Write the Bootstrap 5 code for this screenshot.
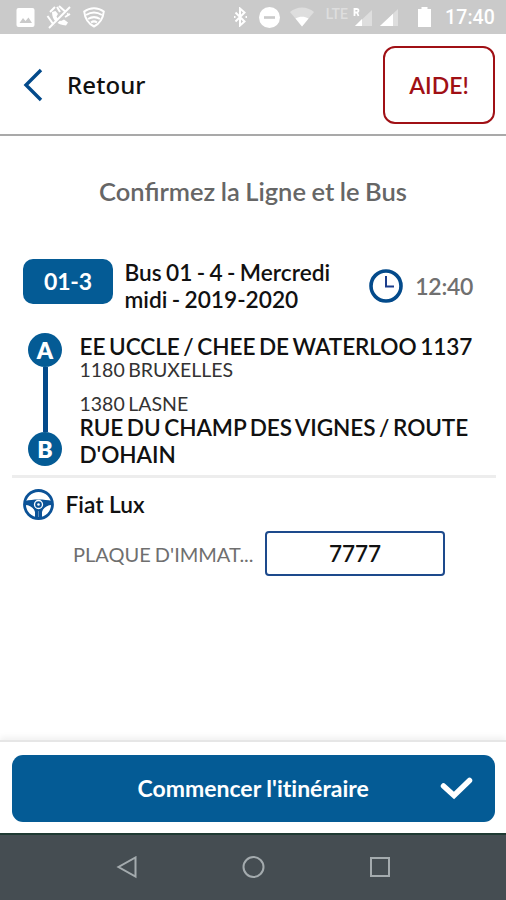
<!DOCTYPE html>
<html lang="fr">
<head>
<meta charset="utf-8">
<meta name="viewport" content="width=device-width, initial-scale=1">
<title>Confirmez la Ligne et le Bus</title>
<link href="https://cdn.jsdelivr.net/npm/bootstrap@5.3.0/dist/css/bootstrap.min.css" rel="stylesheet">
<style>
  :root { --brand: #045b95; --line-blue: #034a8b; }
  body { font-family: Lato, "Open Sans", sans-serif; font-weight: 600; color: #111; height: 900px; overflow: hidden; }
  svg { display: block; flex: none; }
  .status { height: 34px; background: #cacaca; color: #fff; padding: 0 11px 0 16px; }
  .status-time { font: 500 19.5px/34px Roboto, sans-serif; margin-left: 14px; padding-top: 2px; letter-spacing: .1px; }
  .lte { font: 500 14px/14px Roboto, sans-serif; color: #dedede; margin: -7px 5px 0 12px; }
  .gap-alert { margin-left: 11px; }
  .gap-dnd { margin-left: 11px; }
  .gap-wifi { margin-left: 10px; }
  .gap-signal { margin-left: 7px; }
  .gap-battery { margin-left: 20px; }
  .topbar { height: 102px; border-bottom: 2px solid #a9a9a9; padding: 2px 11px 0 23px; }
  .back-label { font-family: "Noto Sans", sans-serif; font-weight: 500; font-size: 24px; line-height: 30px; margin-left: 24px; letter-spacing: .1px; }
  .help { width: 112px; height: 78px; border: 2px solid #a01015; border-radius: 12px; color: #a01015; font-size: 23px; font-weight: 600; padding: 0; }
  .page-title { font-size: 25.5px; line-height: 30px; color: #666; margin: 40px 0 0; font-weight: 600; word-spacing: -.8px; }
  .trip { margin: 53px 33px 0 23px; height: 54px; }
  .line-tag { width: 90px; height: 45px; border-radius: 10px; background: var(--brand); color: #fff; font-size: 23px; line-height: 45px; font-weight: 700; letter-spacing: -.2px; }
  .trip-name { width: 232px; margin: 0 0 0 11.5px; font-size: 22.7px; line-height: 27px; word-spacing: -1.3px; }
  .trip-time { font-size: 23px; color: #707070; margin-left: 12px; line-height: 28px; letter-spacing: -.3px; }
  .stops { margin: 20px 10px 0 12px; padding: 0 0 9px 16px; border-bottom: 3px solid #ededed; height: 145px; }
  .stop-dot { width: 34px; height: 34px; border-radius: 50%; background: var(--brand); color: #fff; font-size: 23px; line-height: 34px; font-weight: 800; }
  .stop-link { width: 5px; height: 65px; background: var(--line-blue); }
  .stop-text { margin: 0 0 0 17.5px; font-size: 22.6px; line-height: 27px; word-spacing: -1.9px; letter-spacing: -.08px; }
  .town { font-size: 19.5px; line-height: 20px; font-weight: 400; color: #333; word-spacing: -1.5px; letter-spacing: 0; }
  .town-end { margin-top: 14px; }
  .driver { margin: 9px 0 0 23px; height: 34px; font-size: 22.7px; }
  .driver-name { margin: 2px 0 0 11.5px; }
  .plate { margin: 10px 61px 0 73px; height: 46px; }
  .plate-label { width: 183px; font-size: 20px; font-weight: 400; color: #6f6f6f; word-spacing: -1px; }
  .plate-input { width: 180px; height: 45px; border: 2px solid #1d4a8c; border-radius: 4px; font-size: 22.500px; font-weight: 600; color: #111; padding: 0; }
  .bottom { height: 93px; border-top: 2px solid #e6e6e6; padding: 13px 11px 0 12px; box-shadow: 0 -3px 6px rgba(0,0,0,.06); }
  .start { height: 67px; border-radius: 11px; background: var(--brand); color: #fff; font-size: 23px; font-weight: 700; padding: 0 22px 0 125.5px; border: 0; font-variant-ligatures: none; }
  .sysnav { height: 67px; background: #454d52; border-top: 2px solid #1f3a33; }
</style>
</head>
<body class="d-flex flex-column bg-white">
  <div class="status d-flex align-items-center">
    <svg width="19" height="19" viewBox="0 0 18 19"><rect width="18" height="19" rx="2" fill="#fff"/><path d="M3 15l3.500-5 2.500 3 3-3.500 3.500 5.500z" fill="#cacaca"/></svg>
    <svg class="gap-alert" width="26" height="26" viewBox="0 0 26 26"><path d="M6 8c0 8 5 13 14 13.500l2-3-4-3-3 1.500c-2-1-3.500-2.500-4.500-4.500L12 10 9.500 7z" fill="#fff"/><path d="M1.500 12l7 10M9 3l-5 5M13 2l9 8M11 3l3 5M19 13l5-3" stroke="#fff" stroke-width="2" fill="none"/><path d="M5 24L25 4" stroke="#cacaca" stroke-width="2"/><path d="M3 24L24 3" stroke="#fff" stroke-width="2"/></svg>
    <svg class="gap-alert" width="22" height="21" viewBox="0 0 22 21"><path d="M1.200 4.500C7 0 15 0 20.800 4.500 20 12 16 17 11 19.500 6 17 2 12 1.200 4.500z" fill="none" stroke="#fff" stroke-width="2"/><path d="M3 8c5-3 11-3 16 0M5 12c4-2.500 8-2.500 12 0M8 15.500c2-1.500 4-1.500 6 0" fill="none" stroke="#fff" stroke-width="2"/></svg>
    <svg class="ms-auto" width="15" height="20" viewBox="0 0 15 20"><path d="M2.500 5.500l9 9L7 18.500v-17l4.500 4L2.500 14.500M1 10h1.500M12.500 10H14" fill="none" stroke="#fff" stroke-width="2"/></svg>
    <svg class="gap-dnd" width="21" height="21" viewBox="0 0 21 21"><circle cx="10.500" cy="10.500" r="10.500" fill="#fff"/><path d="M5 10.500h11" stroke="#cacaca" stroke-width="2.600"/></svg>
    <svg class="gap-wifi" width="24" height="20" viewBox="0 0 24 20"><path d="M0 5C7-1 17-1 24 5L12 19.500z" fill="#dedede"/><path d="M5.500 11.500c4-2.500 9-2.500 13 0L12 19.500z" fill="#fff"/></svg>
    <span class="lte">LTE</span>
    <svg width="20" height="20" viewBox="0 0 20 20"><path d="M19 3v16H2z" fill="#dedede"/><path d="M9 12v7H2z" fill="#fff"/><path d="M1.500 9V2h2.200a1.600 1.600 0 010 3.500H2M4 5.500L5.500 9" stroke="#fff" stroke-width="1.800" fill="none"/></svg>
    <svg class="gap-signal" width="18" height="18" viewBox="0 0 18 18"><path d="M18 1v17H0z" fill="#dedede"/><path d="M13 5.700V18H0z" fill="#fff"/></svg>
    <svg class="gap-battery" width="13" height="20" viewBox="0 0 13 20"><path d="M3.500 0h6v2H13v18H0V2h3.500z" fill="#fff"/></svg>
    <span class="status-time">17:40</span>
  </div>

  <header class="topbar d-flex align-items-center">
    <svg width="20" height="34" viewBox="0 0 20 34"><path d="M18 2L3 17l15 15" fill="none" stroke="#034a8b" stroke-width="3.400"/></svg>
    <span class="back-label">Retour</span>
    <button class="help btn ms-auto">AIDE!</button>
  </header>

  <main class="flex-grow-1">
    <h1 class="page-title text-center">Confirmez la Ligne et le Bus</h1>
    <div class="trip d-flex align-items-center">
      <div class="line-tag text-center align-self-start">01-3</div>
      <div class="trip-name">Bus 01 - 4 - Mercredi<br>midi - 2019-2020</div>
      <svg class="ms-auto" width="34" height="34" viewBox="0 0 34 34"><circle cx="17" cy="17" r="15" fill="none" stroke="#034a8b" stroke-width="3.600"/><path d="M17 7v10.500h8" fill="none" stroke="#1b3c8c" stroke-width="2"/></svg>
      <div class="trip-time">12:40</div>
    </div>
    <div class="stops d-flex">
      <div class="d-flex flex-column align-items-center">
        <div class="stop-dot text-center">A</div>
        <div class="stop-link"></div>
        <div class="stop-dot text-center">B</div>
      </div>
      <div class="stop-text text-nowrap">
        <div>EE UCCLE / CHEE DE WATERLOO 1137</div>
        <div class="town">1180 BRUXELLES</div>
        <div class="town town-end">1380 LASNE</div>
        <div>RUE DU CHAMP DES VIGNES / ROUTE<br>D'OHAIN</div>
      </div>
    </div>
    <div class="driver d-flex align-items-center">
      <svg width="31" height="31" viewBox="0 0 31 31"><circle cx="15.500" cy="15.500" r="14" fill="none" stroke="#0b5297" stroke-width="2.800"/><path d="M2 12c8-2 19-2 27 0v4c-5 0-9 3-10 7v6h-7v-6c-1-4-5-7-10-7z" fill="#0b5297"/><circle cx="15.500" cy="15.500" r="4" fill="#0b5297" stroke="#fff" stroke-width="1.300"/><circle cx="15.500" cy="15.500" r="1.300" fill="#fff"/><path d="M15.500 22v6" stroke="#5b8bbb" stroke-width="1"/></svg>
      <span class="driver-name">Fiat Lux</span>
    </div>
    <div class="plate d-flex align-items-start justify-content-between">
      <label class="plate-label text-nowrap align-self-center" for="plate">PLAQUE D'IMMAT...</label>
      <input id="plate" class="plate-input form-control flex-shrink-0 text-center" value="7777">
    </div>
  </main>

  <div class="bottom bg-white">
    <button class="start btn w-100 d-flex align-items-center justify-content-between"><span>Commencer l'itinéraire</span>
      <svg width="33" height="24" viewBox="0 0 33 24"><path d="M3.500 9l10.500 9.500L29.500 3.500" fill="none" stroke="#fff" stroke-width="5.500" stroke-linecap="round"/></svg>
    </button>
  </div>
  <nav class="sysnav d-flex justify-content-center align-items-center">
    <svg width="274" height="24" viewBox="0 0 274 24" fill="none" stroke="#a4abae" stroke-width="2"><path d="M19.500 1.500v19L2.500 11z"/><circle cx="137.500" cy="11" r="10"/><rect x="255" y="2" width="18" height="18"/></svg>
  </nav>
<script src="https://cdn.jsdelivr.net/npm/bootstrap@5.3.0/dist/js/bootstrap.bundle.min.js"></script>
</body>
</html>
